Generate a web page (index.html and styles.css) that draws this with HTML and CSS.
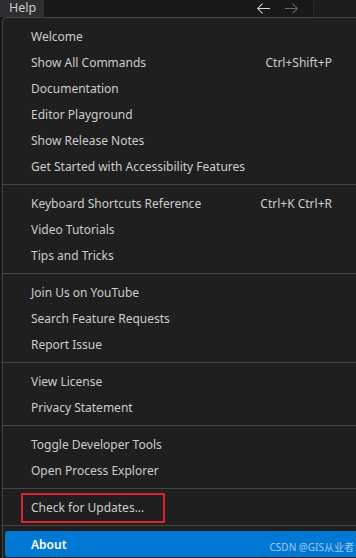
FILE: index.html
```html
<!DOCTYPE html>
<html lang="en">
<head>
  <meta charset="UTF-8" />
  <title>Help Menu</title>
  <link rel="stylesheet" href="styles.css">
</head>
<body>

  <!-- Title bar -->
  <div class="titlebar">
    <div class="menu-title">Help</div>
    <div class="nav">
      <svg class="arrow" width="15" height="15" viewBox="0 0 16 16"><path d="M15 8H1.8M7 2.8L1.8 8L7 13.2" fill="none" stroke="#d4d4d4" stroke-width="1.1"/></svg>
      <svg class="arrow dim" width="15" height="15" viewBox="0 0 16 16"><path d="M1 8h13.2M9 2.8L14.2 8L9 13.2" fill="none" stroke="#cccccc" stroke-width="1.1"/></svg>
    </div>
    <div class="command-center"></div>
  </div>

  <!-- Help dropdown -->
  <div class="menu">
    <div class="item"><span>Welcome</span></div>
    <div class="item"><span>Show All Commands</span><span class="keys">Ctrl+Shift+P</span></div>
    <div class="item"><span>Documentation</span></div>
    <div class="item"><span>Editor Playground</span></div>
    <div class="item"><span>Show Release Notes</span></div>
    <div class="item"><span>Get Started with Accessibility Features</span></div>
    <div class="sep"></div>
    <div class="item"><span>Keyboard Shortcuts Reference</span><span class="keys">Ctrl+K Ctrl+R</span></div>
    <div class="item"><span>Video Tutorials</span></div>
    <div class="item"><span>Tips and Tricks</span></div>
    <div class="sep"></div>
    <div class="item"><span>Join Us on YouTube</span></div>
    <div class="item"><span>Search Feature Requests</span></div>
    <div class="item"><span>Report Issue</span></div>
    <div class="sep"></div>
    <div class="item"><span>View License</span></div>
    <div class="item"><span>Privacy Statement</span></div>
    <div class="sep"></div>
    <div class="item"><span>Toggle Developer Tools</span></div>
    <div class="item"><span>Open Process Explorer</span></div>
    <div class="sep"></div>
    <div class="item check"><span>Check for Updates...</span><span class="mark"></span></div>
    <div class="sep"></div>
    <div class="item active"><span>About</span><span class="watermark">CSDN @GIS从业者</span></div>
  </div>

</body>
</html>
```

FILE: styles.css
```css
* { margin: 0; padding: 0; box-sizing: border-box; }

body {
  font-family: "Noto Sans", "Noto Sans CJK SC", sans-serif;
  font-size: 12px;
  color: #cccccc;
  background: #181818;
  width: 356px;
  height: 558px;
  overflow: hidden;
}

/* Title bar */
.titlebar {
  display: flex;
  height: 17px;
  align-items: stretch;
}
.menu-title {
  width: 44px;
  padding-left: 9px;
  line-height: 16px;
  font-size: 12.5px;
  background: #2e2e2e;
  color: #cccccc;
}
.nav {
  flex: 1;
  display: flex;
  justify-content: flex-end;
  align-items: center;
  gap: 13px;
  padding-right: 14px;
}
.arrow.dim { opacity: 0.45; }
.command-center {
  width: 43px;
  border-left: 1px solid #2b2b2b;
  border-bottom-left-radius: 4px;
  background: #1c1c1c;
}

/* Dropdown (runs off the right side of the shot) */
.menu {
  width: 354px;
  margin-left: 2px;
  padding: 5px 0;
  background: #1f1f1f;
  border: 1px solid #454545;
  border-right: none;
  border-radius: 5px 0 0 5px;
}
.item {
  position: relative;
  display: flex;
  justify-content: space-between;
  align-items: center;
  height: 26px;
  margin-left: 2px;
  padding: 0 24px 0 26px;
  border-radius: 3px 0 0 3px;
  white-space: nowrap;
}
.sep {
  height: 1px;
  margin: 5px 0;
  background: #454545;
}

.item.active {
  background: #0078d4;
  color: #ffffff;
  font-weight: 600;
}
.watermark {
  position: absolute;
  right: 2px;
  top: 8px;
  font-size: 10px;
  font-weight: normal;
  color: rgba(255, 255, 255, 0.62);
}

/* Red highlight box around Check for Updates */
.check .mark {
  position: absolute;
  left: 16px;
  top: -1px;
  width: 144px;
  height: 30px;
  border: 2px solid #d9232d;
}
```
